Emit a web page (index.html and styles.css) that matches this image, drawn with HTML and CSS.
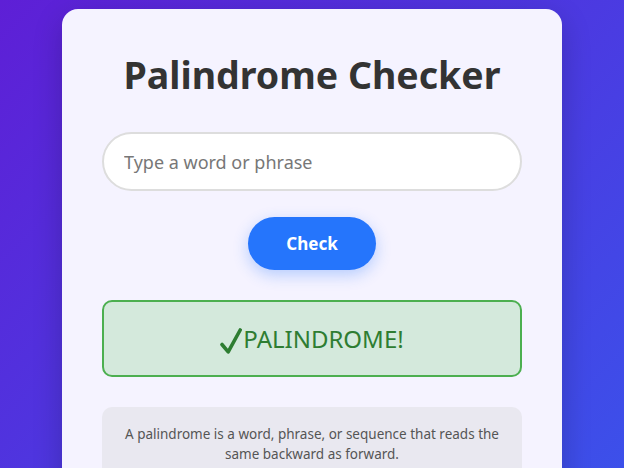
FILE: index.html
```html
<!DOCTYPE html>
<html lang="en">
<head>
<meta charset="utf-8">
<title>Palindrome Checker</title>
<link rel="stylesheet" href="styles.css">
</head>
<body>
<main class="card">
  <h1 class="title">Palindrome Checker</h1>
  <input class="text-input" type="text" placeholder="Type a word or phrase">
  <button class="check-btn" type="button">Check</button>
  <div class="result result-yes"><svg class="tick" width="22" height="26" viewBox="0 0 22 26" aria-hidden="true"><path d="M2 16.5 L8.2 23.8 L20.2 2" fill="none" stroke="#2e7d32" stroke-width="3.6" stroke-linecap="round" stroke-linejoin="round"/></svg>PALINDROME!</div>
  <div class="info">
    <p>A palindrome is a word, phrase, or sequence that reads the same backward as forward.</p>
  </div>
</main>
</body>
</html>
```
FILE: styles.css
```css
html, body {
  margin: 0;
  height: 100%;
}
body {
  font-family: "Noto Sans", "Open Sans", sans-serif;
  background: linear-gradient(135deg, #5e1fd6 0%, #3c50ea 100%);
  background-attachment: fixed;
  padding-top: 9px;
  box-sizing: border-box;
  overflow: hidden;
}
.card {
  width: 500px;
  box-sizing: border-box;
  margin: 0 auto;
  background: #f5f3ff;
  border-radius: 16px;
  padding: 43px 40px 40px;
  display: flex;
  flex-direction: column;
  align-items: center;
  box-shadow: 0 10px 30px rgba(0,0,0,0.2);
}
.title {
  margin: 0 0 35px;
  font-size: 37.5px;
  line-height: 45px;
  font-weight: 700;
  color: #333;
}
.text-input {
  width: 100%;
  box-sizing: border-box;
  height: 59px;
  border: 2px solid #ddd;
  border-radius: 30px;
  padding: 0 20px;
  font-family: inherit;
  font-size: 18px;
  color: #333;
  background: #fff;
  outline: none;
}
.text-input::placeholder {
  color: #777;
}
.check-btn {
  margin-top: 26px;
  width: 128px;
  height: 53px;
  border: none;
  border-radius: 27px;
  background: #2575fc;
  color: #fff;
  font-family: inherit;
  font-size: 17px;
  font-weight: 700;
  box-shadow: 0 5px 15px rgba(37,117,252,0.3);
}
.result {
  margin-top: 30px;
  width: 100%;
  box-sizing: border-box;
  height: 77px;
  border-radius: 10px;
  display: flex;
  align-items: center;
  justify-content: center;
  font-size: 24px;
}
.result-yes {
  background: #d4e9dc;
  border: 2px solid #4caf50;
  color: #2e7d32;
}
.tick {
  display: block;
  margin-right: 1px;
  margin-top: 4px;
}
.info {
  margin-top: 30px;
  width: 100%;
  box-sizing: border-box;
  background: #e9e8f0;
  border-radius: 10px;
  padding: 18px 18px;
  text-align: center;
}
.info p {
  margin: 0;
  font-size: 13.5px;
  line-height: 19.5px;
  color: #555;
}
```
